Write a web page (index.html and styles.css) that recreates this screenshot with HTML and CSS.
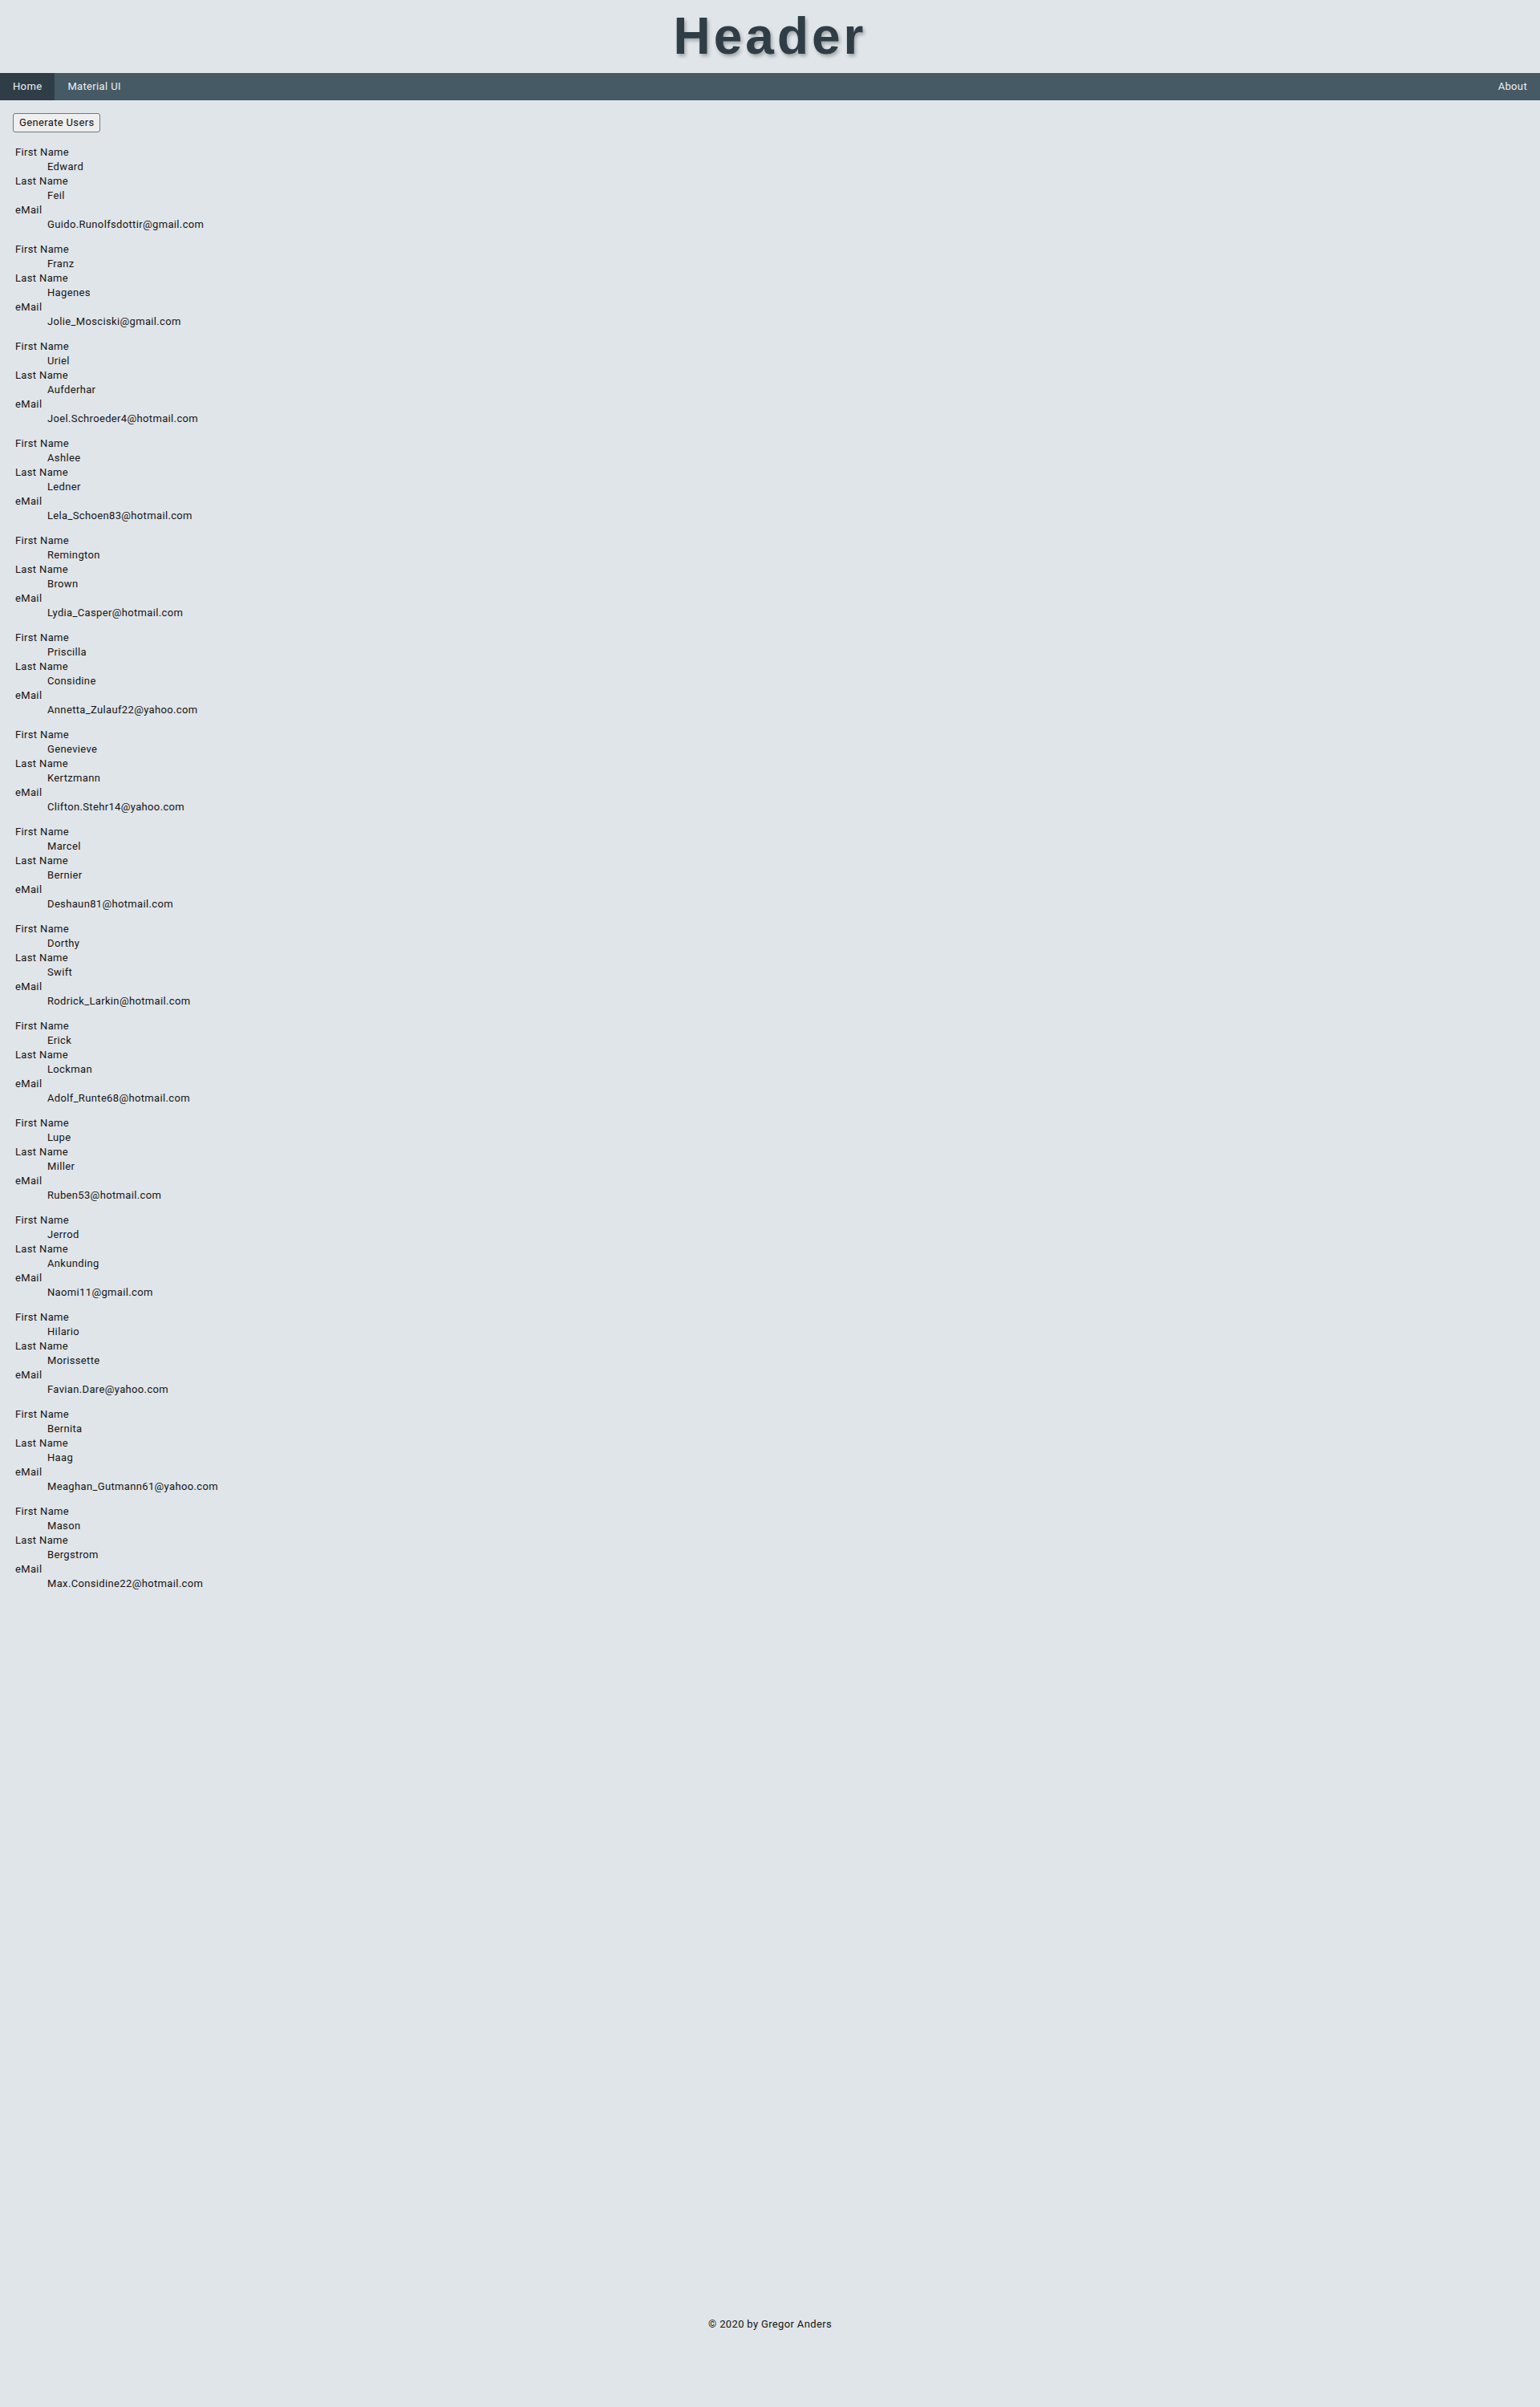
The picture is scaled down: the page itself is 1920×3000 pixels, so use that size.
FILE: index.html
```html
<!DOCTYPE html>
<html lang="en">
<head>
<meta charset="utf-8">
<title>Header</title>
<link rel="stylesheet" href="styles.css">
</head>
<body>
<div class="app">
  <header class="site-header">
    <h1 class="site-title">Header</h1>
  </header>
  <nav class="nav">
    <a class="nav-link active" href="#">Home</a>
    <a class="nav-link" href="#">Material UI</a>
    <span class="nav-spacer"></span>
    <a class="nav-link" href="#">About</a>
  </nav>
  <main class="main">
    <div class="toolbar"><button class="btn" type="button">Generate Users</button></div>
    <div class="users">
      <dl class="user"><dt>First Name</dt><dd>Edward</dd><dt>Last Name</dt><dd>Feil</dd><dt>eMail</dt><dd>Guido.Runolfsdottir@gmail.com</dd></dl>
      <dl class="user"><dt>First Name</dt><dd>Franz</dd><dt>Last Name</dt><dd>Hagenes</dd><dt>eMail</dt><dd>Jolie_Mosciski@gmail.com</dd></dl>
      <dl class="user"><dt>First Name</dt><dd>Uriel</dd><dt>Last Name</dt><dd>Aufderhar</dd><dt>eMail</dt><dd>Joel.Schroeder4@hotmail.com</dd></dl>
      <dl class="user"><dt>First Name</dt><dd>Ashlee</dd><dt>Last Name</dt><dd>Ledner</dd><dt>eMail</dt><dd>Lela_Schoen83@hotmail.com</dd></dl>
      <dl class="user"><dt>First Name</dt><dd>Remington</dd><dt>Last Name</dt><dd>Brown</dd><dt>eMail</dt><dd>Lydia_Casper@hotmail.com</dd></dl>
      <dl class="user"><dt>First Name</dt><dd>Priscilla</dd><dt>Last Name</dt><dd>Considine</dd><dt>eMail</dt><dd>Annetta_Zulauf22@yahoo.com</dd></dl>
      <dl class="user"><dt>First Name</dt><dd>Genevieve</dd><dt>Last Name</dt><dd>Kertzmann</dd><dt>eMail</dt><dd>Clifton.Stehr14@yahoo.com</dd></dl>
      <dl class="user"><dt>First Name</dt><dd>Marcel</dd><dt>Last Name</dt><dd>Bernier</dd><dt>eMail</dt><dd>Deshaun81@hotmail.com</dd></dl>
      <dl class="user"><dt>First Name</dt><dd>Dorthy</dd><dt>Last Name</dt><dd>Swift</dd><dt>eMail</dt><dd>Rodrick_Larkin@hotmail.com</dd></dl>
      <dl class="user"><dt>First Name</dt><dd>Erick</dd><dt>Last Name</dt><dd>Lockman</dd><dt>eMail</dt><dd>Adolf_Runte68@hotmail.com</dd></dl>
      <dl class="user"><dt>First Name</dt><dd>Lupe</dd><dt>Last Name</dt><dd>Miller</dd><dt>eMail</dt><dd>Ruben53@hotmail.com</dd></dl>
      <dl class="user"><dt>First Name</dt><dd>Jerrod</dd><dt>Last Name</dt><dd>Ankunding</dd><dt>eMail</dt><dd>Naomi11@gmail.com</dd></dl>
      <dl class="user"><dt>First Name</dt><dd>Hilario</dd><dt>Last Name</dt><dd>Morissette</dd><dt>eMail</dt><dd>Favian.Dare@yahoo.com</dd></dl>
      <dl class="user"><dt>First Name</dt><dd>Bernita</dd><dt>Last Name</dt><dd>Haag</dd><dt>eMail</dt><dd>Meaghan_Gutmann61@yahoo.com</dd></dl>
      <dl class="user"><dt>First Name</dt><dd>Mason</dd><dt>Last Name</dt><dd>Bergstrom</dd><dt>eMail</dt><dd>Max.Considine22@hotmail.com</dd></dl>
    </div>
  </main>
  <footer class="footer">© 2020 by Gregor Anders</footer>
</div>
</body>
</html>
```
FILE: styles.css
```css
html, body {
  margin: 0;
  padding: 0;
}
body {
  background: #e0e5e9;
  color: #141414;
  font-family: Roboto, "Noto Sans", sans-serif;
  font-size: 13px;
  line-height: 18px;
  letter-spacing: 0.35px;
}
.app {
  min-height: 100vh;
  display: flex;
  flex-direction: column;
}
.site-header {
  padding: 9px 0;
  text-align: center;
}
.site-title {
  margin: 0;
  font-family: "Liberation Sans", Arial, sans-serif;
  font-weight: 700;
  font-size: 64px;
  line-height: 73px;
  letter-spacing: 4px;
  color: #2f3e46;
  text-shadow: 2px 3px 4px rgba(0, 0, 0, 0.28);
}
.nav {
  display: flex;
  align-items: stretch;
  background: #455a64;
  height: 34px;
}
.nav-link {
  display: flex;
  align-items: center;
  padding: 0 16px;
  color: #eef1f3;
  text-decoration: none;
  font-size: 13px;
}
.nav-link.active {
  background: #2f3e46;
}
.nav-spacer {
  flex: 1;
}
.main {
  flex: 1;
  padding: 16px 16px 0;
}
.toolbar {
  margin-bottom: 16px;
}
.btn {
  font-family: Roboto, "Noto Sans", sans-serif;
  font-size: 13px;
  line-height: 16px;
  letter-spacing: 0.35px;
  color: #111;
  background: #efefef;
  border: 1px solid #767676;
  border-radius: 3px;
  padding: 3px 7px;
  margin: 0;
  height: 24px;
}
.users {
  padding-left: 3px;
}
.user {
  margin: 0 0 13px;
}
.user dt {
  margin: 0;
}
.user dd {
  margin: 0 0 0 40px;
}
.footer {
  text-align: center;
  line-height: 18px;
  padding: 0 0 94px;
  color: #141414;
}
```
